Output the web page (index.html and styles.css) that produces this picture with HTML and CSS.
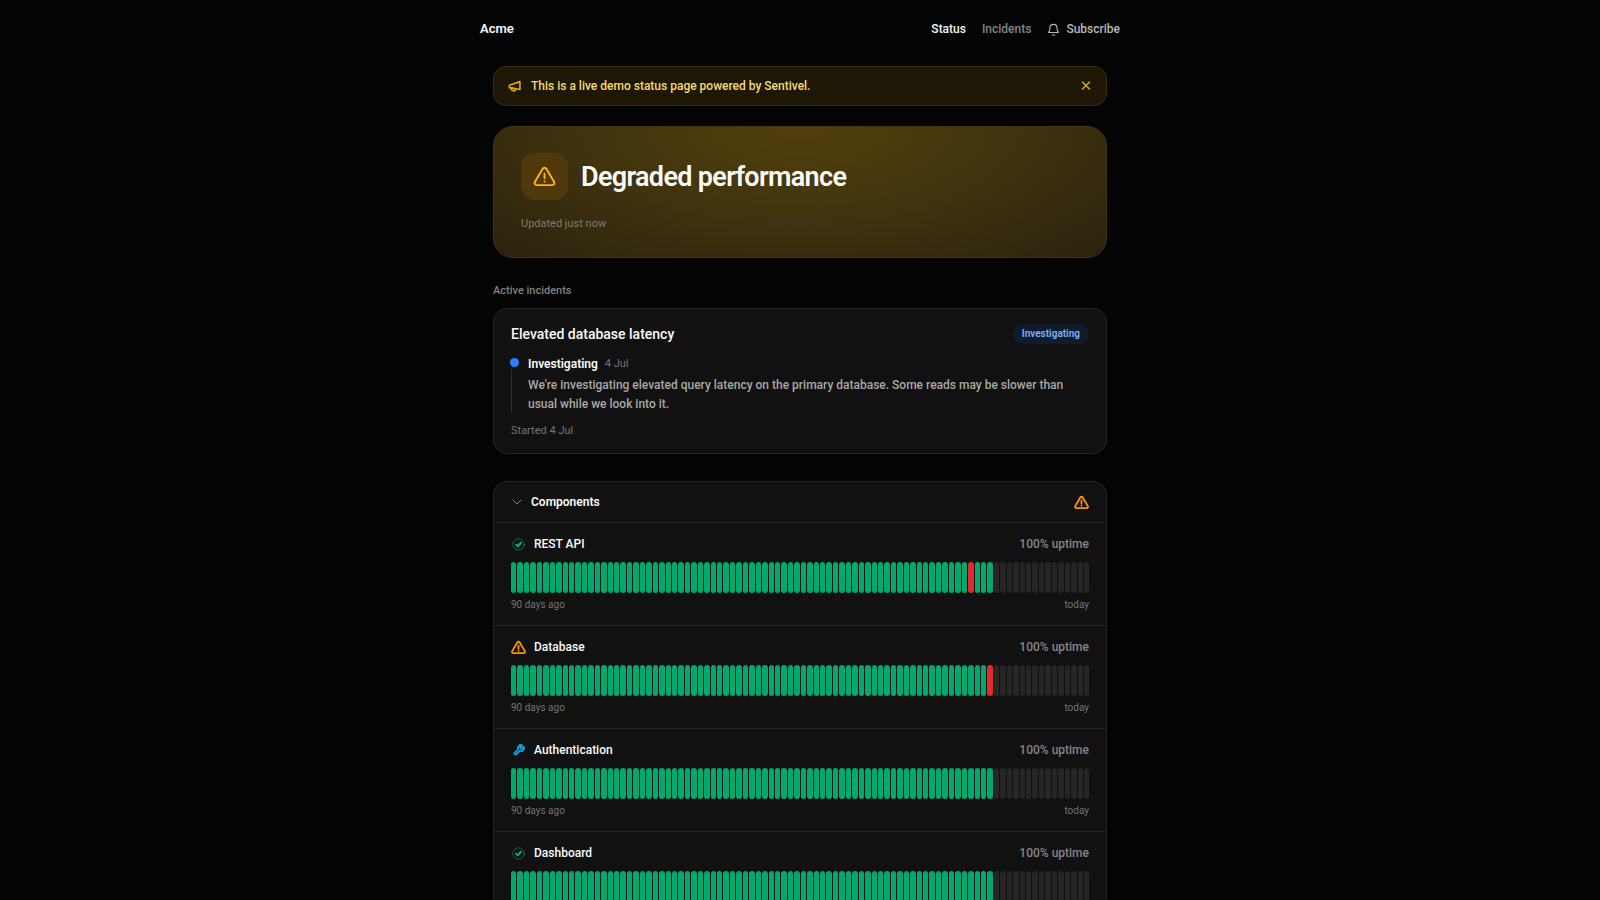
FILE: index.html
```html
<!DOCTYPE html>
<html lang="en">
<head>
<meta charset="utf-8">
<meta name="viewport" content="width=device-width, initial-scale=1">
<title>Acme status</title>
<link rel="stylesheet" href="styles.css">
</head>
<body>
<svg class="sprite" aria-hidden="true">
  <symbol id="warning" viewBox="0 0 24 24"><path d="M10.1 3.9 1.9 17.8A2.2 2.2 0 0 0 3.8 21h16.400a2.200 2.200 0 0 0 1.900-3.200L13.900 3.900a2.200 2.200 0 0 0-3.800 0ZM12 9.200v4.600M12 17.200v.1"/></symbol>
  <symbol id="check" viewBox="0 0 24 24"><circle cx="12" cy="12" r="10.5" stroke-width="1.5" opacity=".65"/><path d="m7.500 12.300 3 3 6-6.500" stroke-width="3.500"/></symbol>
  <symbol id="wrench" viewBox="0 0 24 24"><path d="M14.500 6.500a1 1 0 0 0 0 1.400l1.600 1.600a1 1 0 0 0 1.400 0l3.900-3.800a6 6 0 0 1-7.900 7.900l-7 7a2.300 2.300 0 0 1-3.100-3.100l7-7a6 6 0 0 1 7.900-7.900l-3.800 3.900Z" stroke-width="3.500"/></symbol>
</svg>
<header class="topbar">
  <a class="brand" href="#">Acme</a>
  <nav class="nav">
    <a class="nav-link active" href="#">Status</a>
    <a class="nav-link" href="#">Incidents</a>
    <button class="subscribe" type="button">
      <svg class="icon bell" viewBox="0 0 24 24"><path d="M12 2.500a6.500 6.500 0 0 0-6.500 6.500c0 4-1 6.200-2.500 8.500h18c-1.500-2.300-2.500-4.500-2.500-8.500A6.500 6.500 0 0 0 12 2.500ZM10 22h4"/></svg>
      Subscribe
    </button>
  </nav>
</header>
<main class="page">
  <section class="notice">
    <svg class="icon megaphone" viewBox="0 0 24 24"><path d="M22 3v14.500L7 14.500H2.500v-5L22 3ZM6 15l1.500 4.500 5.500.5v-3.500"/></svg>
    <p class="notice-text">This is a live demo status page powered by Sentivel.</p>
    <button class="dismiss" type="button" aria-label="Dismiss"><svg class="icon cross" viewBox="0 0 24 24"><path d="m5 4 14 14M19 4 5 18"/></svg></button>
  </section>
  <section class="hero">
    <div class="hero-head">
      <span class="hero-badge"><svg class="icon hero-icon"><use href="#warning"/></svg></span>
      <h1 class="hero-title">Degraded performance</h1>
    </div>
    <p class="hero-updated">Updated just now</p>
  </section>
  <section class="incidents">
    <h2 class="section-label">Active incidents</h2>
    <article class="card incident">
      <div class="incident-head">
        <h3 class="incident-title">Elevated database latency</h3>
        <span class="pill">Investigating</span>
      </div>
      <div class="update">
        <div class="rail"><span class="dot"></span><span class="line"></span></div>
        <div class="update-body">
          <p class="update-head"><strong class="update-state">Investigating</strong><time class="update-date">4 Jul</time></p>
          <p class="update-text">We're investigating elevated query latency on the primary database. Some reads may be slower than usual while we look into it.</p>
        </div>
      </div>
      <p class="started">Started 4 Jul</p>
    </article>
  </section>
  <section class="card components">
    <button class="group-head" type="button" aria-expanded="true">
      <svg class="icon chevron" viewBox="0 0 24 24"><path d="m4 8 8 8 8-8"/></svg>
      <span class="group-name">Components</span>
      <svg class="icon state-icon warn"><use href="#warning"/></svg>
    </button>
    <article class="component">
      <div class="component-head"><span class="mark"><svg class="icon ok"><use href="#check"/></svg></span><h3 class="component-name">REST API</h3><span class="uptime">100% uptime</span></div>
      <div class="bars" data-outage="71"></div>
      <div class="range"><span>90 days ago</span><span>today</span></div>
    </article>
    <article class="component">
      <div class="component-head"><span class="mark"><svg class="icon state-icon warn"><use href="#warning"/></svg></span><h3 class="component-name">Database</h3><span class="uptime">100% uptime</span></div>
      <div class="bars" data-outage="74"></div>
      <div class="range"><span>90 days ago</span><span>today</span></div>
    </article>
    <article class="component">
      <div class="component-head"><span class="mark"><svg class="icon maintenance"><use href="#wrench"/></svg></span><h3 class="component-name">Authentication</h3><span class="uptime">100% uptime</span></div>
      <div class="bars"></div>
      <div class="range"><span>90 days ago</span><span>today</span></div>
    </article>
    <article class="component">
      <div class="component-head"><span class="mark"><svg class="icon ok"><use href="#check"/></svg></span><h3 class="component-name">Dashboard</h3><span class="uptime">100% uptime</span></div>
      <div class="bars"></div>
    </article>
  </section>
</main>
<script src="bars.js"></script>
</body>
</html>
```
FILE: bars.js
```js
const DAYS = 90;
const RECORDED = 75;
document.querySelectorAll('.bars').forEach((row) => {
  const outage = row.dataset.outage === undefined ? -1 : Number(row.dataset.outage);
  for (let day = 0; day < DAYS; day++) {
    const bar = document.createElement('span');
    bar.className = 'bar';
    if (day === outage) bar.classList.add('down');
    else if (day < RECORDED) bar.classList.add('up');
    row.append(bar);
  }
});
```
FILE: styles.css
```css
* { box-sizing: border-box; }
body {
  margin: 0;
  background: #040404;
  color: #fafafa;
  font: 500 12px/20px Roboto, "Liberation Sans", sans-serif;
}
h1, h2, h3, p { margin: 0; }
a { color: inherit; text-decoration: none; }
button { padding: 0; border: 0; background: none; color: inherit; font: inherit; cursor: pointer; }
.sprite { position: absolute; width: 0; height: 0; }
.icon { display: block; flex: none; fill: none; stroke: currentColor; stroke-width: 2; stroke-linecap: round; stroke-linejoin: round; }
.topbar { display: flex; align-items: center; justify-content: space-between; max-width: 640px; height: 58px; margin: 0 auto; }
.brand { font-size: 13px; font-weight: 600; }
.nav { display: flex; align-items: center; gap: 16px; color: #858585; }
.active { color: #f4f4f4; }
.subscribe { display: flex; align-items: center; gap: 6px; color: #b8b8b8; }
.bell { width: 13px; height: 13px; }
.page { max-width: 640px; margin: 0 auto; padding: 8px 13px 40px; }
.notice { display: flex; align-items: center; gap: 10px; height: 40px; padding: 0 14px; border: 1px solid #3d2e08; border-radius: 13px; background: #1e1706; color: #f3dc72; }
.megaphone { width: 13px; height: 13px; color: #eaa308; stroke-width: 3; }
.notice-text { flex: 1; }
.dismiss { color: #dba90c; }
.cross { width: 12px; height: 12px; stroke-width: 3; }
.hero { margin-top: 20px; padding: 26px 27px 23px; border: 1px solid #453508; border-radius: 20px; background: radial-gradient(ellipse 75% 150% at 50% 0, #52400c 0%, #3f320e 50%, #27200f 100%); }
.hero-head { display: flex; align-items: center; gap: 13px; }
.hero-badge { display: grid; place-items: center; width: 47px; height: 47px; border-radius: 14px; background: #50380b; color: #fdb602; }
.hero-icon { width: 23px; height: 23px; }
.hero-title { font-size: 27px; line-height: 32px; font-weight: 600; letter-spacing: -0.025em; }
.hero-updated { margin-top: 14px; color: #837c6b; font-size: 11px; font-weight: 400; }
.section-label { margin: 23px 0 7px; color: #808080; font-size: 11px; font-weight: 500; }
.card { border: 1px solid #262626; border-radius: 14px; background: #111111; }
.incident { padding: 15px 17px 12px; }
.incident-head { display: flex; align-items: center; justify-content: space-between; }
.incident-title { font-size: 14px; font-weight: 500; }
.pill { padding: 0 9px; border-radius: 10px; background: #101b2b; color: #78b5ff; font-size: 10px; font-weight: 600; }
.update { display: flex; gap: 8px; margin-top: 10px; }
.rail { display: flex; flex-direction: column; width: 9px; padding: 4px 0 1px; }
.dot { width: 9px; height: 9px; margin-left: -1px; border-radius: 50%; background: #2b7fff; }
.line { flex: 1; width: 1px; margin-top: 2px; background: #303030; }
.update-body { flex: 1; }
.update-head { display: flex; align-items: center; gap: 7px; }
.update-state { font-weight: 600; }
.update-date { color: #747474; font-size: 11px; font-weight: 400; }
.update-text { margin-top: 2px; color: #a8a8a8; line-height: 19px; }
.started { margin-top: 7px; color: #747474; font-size: 11px; font-weight: 400; }
.components { margin-top: 27px; overflow: hidden; }
.group-head { display: flex; align-items: center; gap: 8px; width: 100%; height: 40px; padding: 0 17px; text-align: left; }
.chevron { width: 12px; height: 12px; color: #808080; }
.group-name { flex: 1; font-weight: 600; }
.state-icon { width: 15px; height: 15px; }
.warn { color: #fb9300; stroke-width: 3; }
.component { padding: 11px 17px 10px; border-top: 1px solid #262626; }
.component-head { display: flex; align-items: center; gap: 8px; }
.mark { display: grid; place-items: center; width: 15px; height: 16px; }
.ok { width: 13px; height: 13px; color: #00bc7d; }
.maintenance { width: 12px; height: 12px; color: #0ea5e9; }
.component-name { flex: 1; font-size: 12px; font-weight: 500; }
.uptime { color: #858585; }
.bars { display: flex; gap: 1px; height: 31px; margin-top: 8px; }
.bar { flex: 1; border-radius: 3px; background: #262626; }
.up { background: #02a96f; }
.down { background: #e42a30; }
.range { display: flex; justify-content: space-between; margin-top: 2px; color: #747474; font-size: 10px; font-weight: 400; }
```
